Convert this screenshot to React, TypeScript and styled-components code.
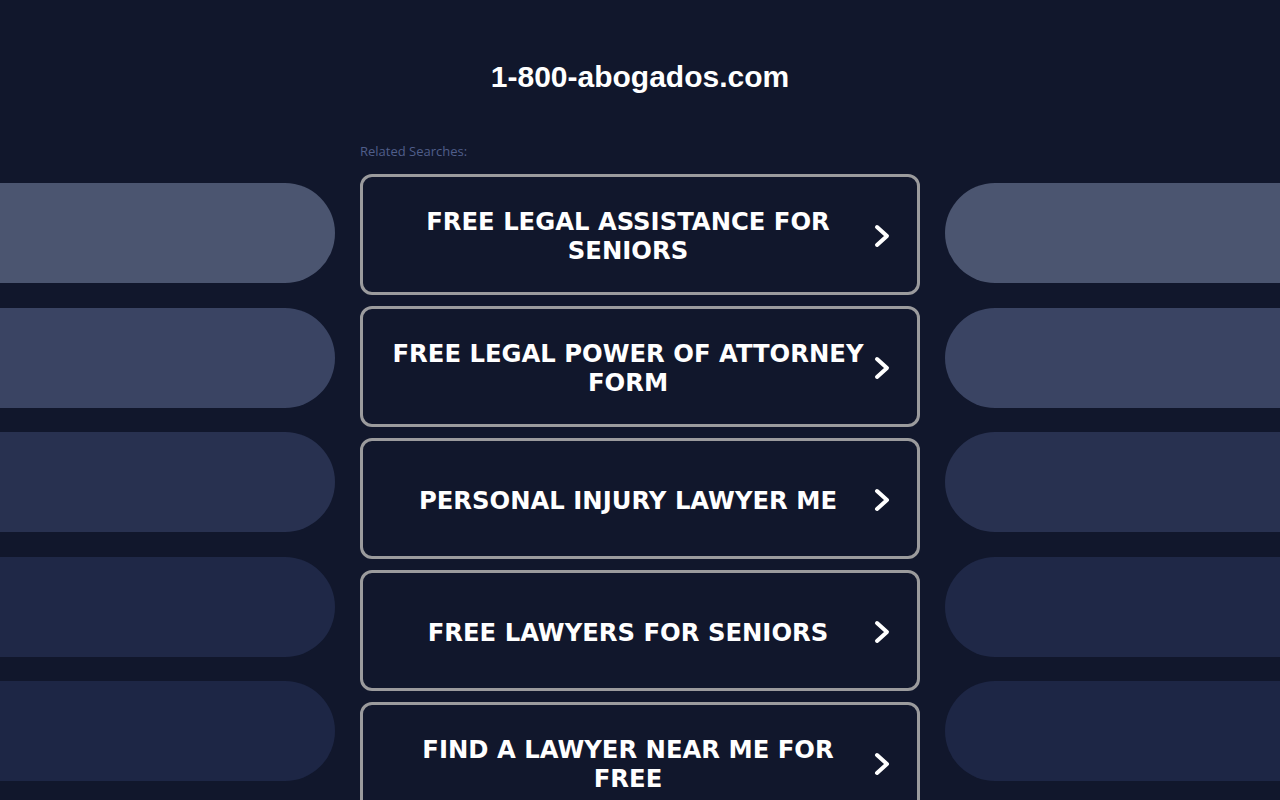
import React from "react";
import styled, { createGlobalStyle } from "styled-components";

const searches = [
	"FREE LEGAL ASSISTANCE FOR SENIORS",
	"FREE LEGAL POWER OF ATTORNEY FORM",
	"PERSONAL INJURY LAWYER ME",
	"FREE LAWYERS FOR SENIORS",
	"FIND A LAWYER NEAR ME FOR FREE",
];

const pillColors = ["#4b5570", "#3a4463", "#283150", "#1f2847", "#1d2645"];

const Chevron = () => (
	<Arrow width="24" height="32" viewBox="0 0 24 32" fill="none">
		<path
			d="M7 7 L17 16 L7 25"
			stroke="#ffffff"
			strokeWidth="4"
			strokeLinecap="round"
			strokeLinejoin="round"
		/>
	</Arrow>
);

const App = () => {
	return (
		<>
			<GlobalStyle />
			<Page>
				<Title>1-800-abogados.com</Title>
				<Main>
					<Side>
						{pillColors.map((c) => (
							<Pill key={c} $color={c} $side="left" />
						))}
					</Side>
					<Center>
						<Label>Related Searches:</Label>
						<List>
							{searches.map((s) => (
								<SearchButton key={s}>
									<ButtonText>{s}</ButtonText>
									<Chevron />
								</SearchButton>
							))}
						</List>
					</Center>
					<Side>
						{pillColors.map((c) => (
							<Pill key={c} $color={c} $side="right" />
						))}
					</Side>
				</Main>
			</Page>
		</>
	);
};

export default App;

const GlobalStyle = createGlobalStyle`
	html, body {
		margin: 0;
		padding: 0;
		background-color: #11172c;
	}
	body {
		height: 800px;
		overflow: hidden;
	}
`;

const Page = styled.div`
	width: 1280px;
	height: 800px;
	overflow: hidden;
	display: flex;
	flex-direction: column;
	align-items: center;
`;

const Title = styled.h1`
	margin: 0;
	padding-top: 59px;
	height: 38px;
	line-height: 36px;
	font-family: "Liberation Sans", Arial, sans-serif;
	font-size: 30px;
	font-weight: 700;
	color: #ffffff;
	text-align: center;
`;

const Main = styled.div`
	width: 100%;
	display: grid;
	grid-template-columns: 1fr 560px 1fr;
	column-gap: 25px;
	margin-top: 48px;
`;

const Side = styled.div`
	display: flex;
	flex-direction: column;
	gap: 24.5px;
	padding-top: 40px;
`;

const Pill = styled.div<{ $color: string; $side: "left" | "right" }>`
	height: 100px;
	background-color: ${(p) => p.$color};
	border-radius: ${(p) => (p.$side === "left" ? "0 50px 50px 0" : "50px 0 0 50px")};
`;

const Center = styled.div`
	display: flex;
	flex-direction: column;
`;

const Label = styled.div`
	font-family: "Open Sans", "Noto Sans", sans-serif;
	font-size: 13px;
	line-height: 16px;
	height: 16px;
	color: #505e8a;
	margin-bottom: 15px;
`;

const List = styled.div`
	display: flex;
	flex-direction: column;
	gap: 11px;
`;

const SearchButton = styled.div`
	box-sizing: border-box;
	height: 121px;
	border: 3px solid #9b9b9d;
	border-radius: 12px;
	display: flex;
	align-items: center;
	padding: 0 23px 0 27px;
	cursor: pointer;
`;

const ButtonText = styled.div`
	flex: 1;
	margin-right: 4px;
	padding-top: 3px;
	font-family: "DejaVu Sans", Verdana, sans-serif;
	font-weight: 700;
	font-size: 24.3px;
	line-height: 29px;
	color: #ffffff;
	text-align: center;
`;

const Arrow = styled.svg`
	flex-shrink: 0;
	margin-top: 3px;
`;
